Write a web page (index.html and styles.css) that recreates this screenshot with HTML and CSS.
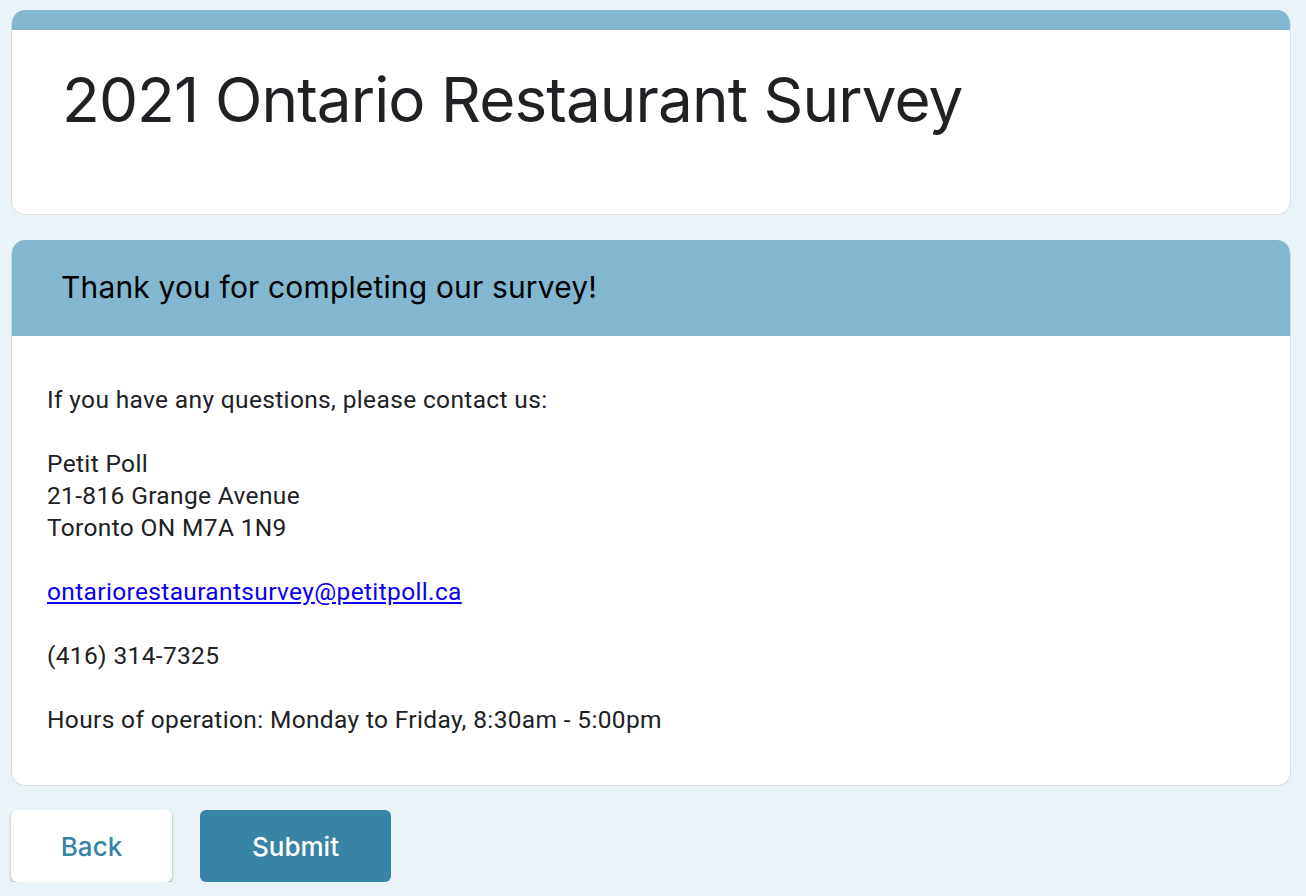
FILE: index.html
```html
<!DOCTYPE html>
<html lang="en">
<head>
<meta charset="utf-8">
<title>2021 Ontario Restaurant Survey</title>
<link rel="stylesheet" href="styles.css">
</head>
<body>
<main class="page">
  <section class="card title-card">
    <div class="card-top"></div>
    <h1 class="title">2021 Ontario Restaurant Survey</h1>
  </section>
  <section class="card section-card">
    <div class="section-header">
      <h2 class="section-title">Thank you for completing our survey!</h2>
    </div>
    <div class="section-body">
      <p>If you have any questions, please contact us:</p>
      <p>Petit Poll<br>21-816 Grange Avenue<br>Toronto ON M7A 1N9</p>
      <p><a class="email" href="#">ontariorestaurantsurvey@petitpoll.ca</a></p>
      <p>(416) 314-7325</p>
      <p>Hours of operation: Monday to Friday, 8:30am - 5:00pm</p>
    </div>
  </section>
  <div class="actions">
    <button class="btn btn-back" type="button">Back</button>
    <button class="btn btn-submit" type="button">Submit</button>
  </div>
</main>
</body>
</html>
```

FILE: styles.css
```css
html, body {
  margin: 0;
  padding: 0;
  background: #eaf3f7;
}
body {
  font-family: Roboto, "Liberation Sans", sans-serif;
  color: #202124;
}
.page {
  padding: 10px 15px 0 11px;
  display: flex;
  flex-direction: column;
}
.card {
  background: #fff;
  border-radius: 14px;
  border: 1.5px solid #dadce0;
  border-top: none;
  overflow: hidden;
}
.title-card {
  height: 205px;
  box-sizing: border-box;
}
.card-top {
  height: 20px;
  background: #82b7d0;
}
.title {
  margin: 0;
  padding: 33px 0 0 50px;
  font-family: Inter, "Open Sans", sans-serif;
  font-weight: 400;
  font-size: 62px;
  letter-spacing: -0.9px;
  line-height: 1.2;
  color: #202124;
}
.section-card {
  margin-top: 25px;
}
.section-header {
  background: #82b7d0;
  height: 96px;
  display: flex;
  align-items: center;
  padding-left: 49px;
}
.section-title {
  margin: 0;
  font-family: Inter, "Open Sans", sans-serif;
  font-weight: 400;
  font-size: 30px;
  letter-spacing: 0.15px;
  color: #000;
  padding-bottom: 2px;
}
.section-body {
  padding: 48px 36px 49px 35px;
  font-size: 24.5px;
  line-height: 32px;
  letter-spacing: 0.35px;
}
.section-body p {
  margin: 0 0 32px;
}
.section-body p:last-child {
  margin-bottom: 0;
}
.email {
  color: #0b00f0;
}
.actions {
  display: flex;
  gap: 28px;
  margin-top: 24px;
}
.btn {
  height: 72px;
  border-radius: 6px;
  font-family: Inter, "Open Sans", sans-serif;
  font-size: 26px;
  font-weight: 500;
  border: none;
  cursor: pointer;
}
.btn-back {
  width: 161px;
  background: #fff;
  color: #3784a6;
  box-shadow: 0 2px 3px rgba(0,0,0,0.3);
}
.btn-submit {
  width: 191px;
  background: #3784a6;
  color: #fff;
}
```
